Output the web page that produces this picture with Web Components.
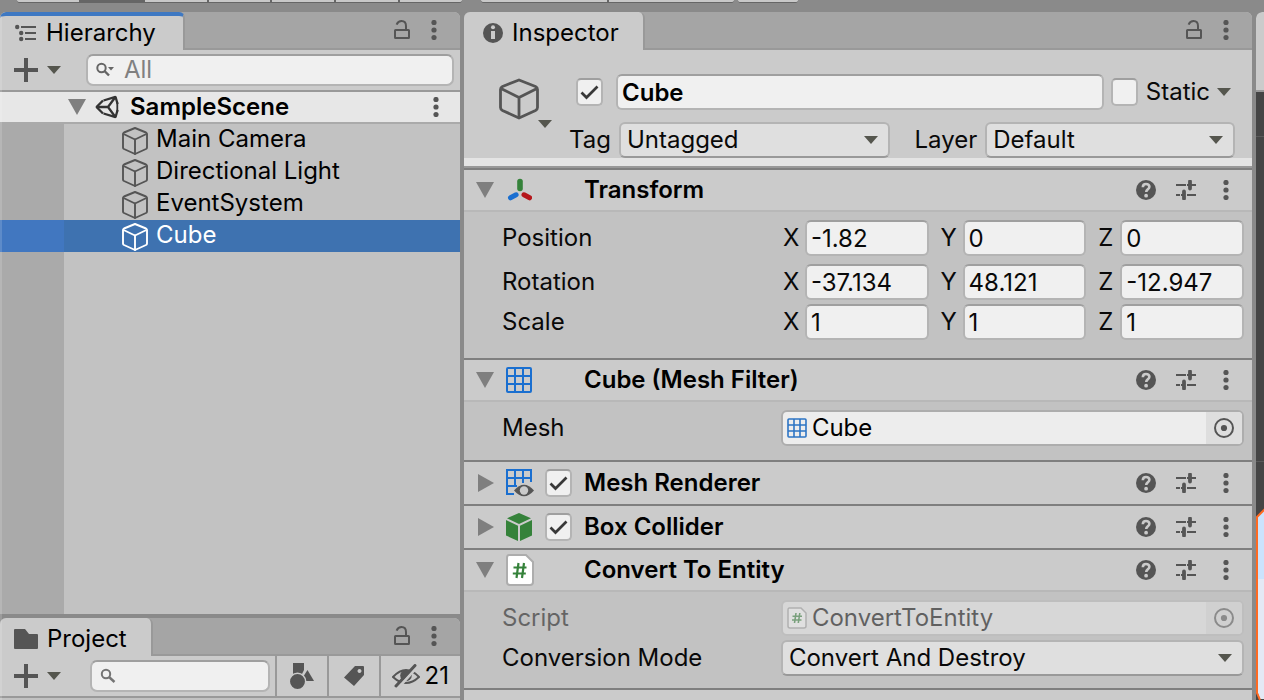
<!DOCTYPE html>
<html lang="en">
<head>
<meta charset="utf-8">
<title>Editor</title>
<style>
  html, body { margin: 0; height: 100%; }
  body {
    font-family: Inter, "Liberation Sans", sans-serif;
    font-size: 24px;
    line-height: 30px;
    color: #090909;
    background: #8a8a8a;
    overflow: hidden;
    --panel: #c2c2c2;
    --bar: #cbcbcb;
    --field: #f0f0f0;
    --ink: #555555;
    --edge: #b4b4b4;
    --edge-dark: #9f9f9f;
    --rule: #7f7f7f;
  }
</style>
</head>
<body>
<editor-app></editor-app>

<script>
const ICONS = {
  list: [23, 18, `<g fill="currentColor"><circle cx="3.2" cy="3" r="2.2"/><circle cx="7.2" cy="9" r="2.2"/><circle cx="7.2" cy="15" r="2.2"/><path d="M7 2h15v2H7zM11 8h11v2H11zM11 14h11v2H11z"/></g>`],
  folder: [24, 20, `<path fill="currentColor" d="M1 0h10l4 5h8a1 1 0 0 1 1 1v13a1 1 0 0 1-1 1H1a1 1 0 0 1-1-1V1a1 1 0 0 1 1-1z"/>`],
  info: [20, 20, `<circle cx="10" cy="10" r="10" fill="currentColor"/><circle cx="10" cy="4.2" r="2" fill="#cbcbcb"/><path fill="#cbcbcb" d="M8 8h4v8H8z"/>`],
  lock: [18, 20, `<g fill="none" stroke="currentColor" stroke-width="2"><rect x="2" y="10" width="14" height="8" rx=".5"/><path d="M3.6 4.6C4.6 2.300 6.400 1 8.600 1 11.500 1 13 3.200 13 6v4"/></g>`],
  kebab: [6, 20, `<g fill="currentColor"><circle cx="3" cy="2.5" r="2.6"/><circle cx="3" cy="10" r="2.6"/><circle cx="3" cy="17.500" r="2.6"/></g>`],
  plus: [24, 24, `<path fill="currentColor" d="M10 0h4v10h10v4H14v10h-4V14H0v-4h10z"/>`],
  down: [14, 8, `<path fill="#55564e" d="M0 0h14L7 8z"/>`],
  search: [18, 16, `<g fill="none" stroke="#747474"><circle cx="6" cy="6" r="4.200" stroke-width="2"/><path d="M9 9l5.500 5" stroke-width="2.400"/></g>`],
  searchmenu: [18, 16, `<g fill="none" stroke="#666"><circle cx="5.500" cy="6" r="4.200" stroke-width="2"/><path d="M8.500 9l4.500 4.500" stroke-width="2.400"/></g><path fill="#666" d="M12 5h6l-3 3.400z"/>`],
  open: [18, 16, `<path fill="#7f7f7f" d="M0 0h18L9 16z"/>`],
  closed: [18, 18, `<path fill="#7f7f7f" d="M2 0v18l16-9z"/>`],
  scene: [24, 24, `<g fill="none" stroke="#333" stroke-width="2.300" stroke-linejoin="bevel"><path d="M8 5.500L1.500 12 8 18.500"/><path d="M8.500 5.500L20.500 1.800 22.600 9"/><path d="M8.500 18.500L20.500 22.200 22.600 15"/><path d="M2 12h11M13 12L20.400 2M13 12l7.400 10"/><path d="M22.300 7.500v9" stroke-width="1.800"/></g>`],
  cube: [26, 28, `<g fill="none" stroke="currentColor" stroke-width="1.900" stroke-linejoin="round" stroke-linecap="round"><path d="M13 1L24 5.500q1 .5 1 1.500v13.500q0 1-1 1.500L13 27 2 22q-1-.5-1-1.500V7q0-1 1-1.500z"/><path d="M1.600 7L13 12.500 24.400 7M13 12.500V27"/></g>`],
  bigcube: [40, 42, `<g fill="none" stroke="#555" stroke-width="2.800" stroke-linejoin="round" stroke-linecap="round"><path d="M20 2L36.500 8.500q2 1 2 3v18q0 2-2 3L20 40 3.500 32.500q-2-1-2-3v-18q0-2 2-3z"/><path d="M3 11L20 19.500 37 11M20 19.500V39"/></g>`],
  transform: [26, 24, `<g stroke-linecap="round" stroke-width="5.600"><path d="M14 3.500v7" stroke="#35823a"/><path d="M4.500 19.800l5.600-3" stroke="#1a6fd0" stroke-width="5"/><path d="M18 16.800l5.600 3" stroke="#b5171b" stroke-width="5"/></g>`],
  grid: [26, 26, `<g fill="none" stroke="#1a6fd0" stroke-width="2"><rect x="1" y="1" width="24" height="24" rx="1"/><path d="M9 1v24M17 1v24M1 9h24M1 17h24"/></g>`],
  gridsmall: [20, 20, `<g fill="none" stroke="#2c74c4" stroke-width="1.600"><rect x="1" y="1" width="18" height="18" rx="1"/><path d="M7 1v18M13 1v18M1 7h18M1 13h18"/></g>`],
  renderer: [28, 28, `<g fill="none" stroke="#1a6fd0" stroke-width="2"><path d="M25 13V1H1v24h7M9 1v16M17 1v13M1 9h24M1 17h10"/></g><path fill="#555" d="M8 21.500Q18 10 28 21.500 18 33 8 21.500z"/><circle cx="18" cy="21.500" r="4.200" fill="#cbcbcb"/>`],
  box: [26, 28, `<path fill="#35823a" d="M13 0l12 5.200-12 5.800L1 5.200zM0 7l12 5.700V28L0 22.500zM26 7l-12 5.700V28l12-5.500z"/>`],
  script: [28, 32, `<path d="M3 1h17l7 7v20q0 3-3 3H4q-3 0-3-3V4q0-3 2-3z" fill="#fff" stroke="#adadad" stroke-width="2"/><path d="M12.500 9l-2 15M18 9l-2 15M7.500 13.500h13M6.800 19.500h13" stroke="#35823a" stroke-width="2.200" fill="none"/>`],
  scriptsmall: [20, 22, `<path d="M2 1h12l5 5v13q0 2-2 2H3q-2 0-2-2V3q0-2 1-2z" fill="#fff" stroke="#a0a0a0" stroke-width="1.500"/><path d="M9 6L7.500 16M12.800 6l-1.500 10M5.500 9.200h9.500M5 13h9.500" stroke="#35823a" stroke-width="1.600" fill="none"/>`],
  help: [20, 20, `<circle cx="10" cy="10" r="10" fill="currentColor"/><path d="M6.800 7.200C6.900 5 8.200 4 10 4c2 0 3.400 1.100 3.400 2.800 0 2.400-3.200 2.600-3.200 5.200" fill="none" stroke="#cbcbcb" stroke-width="2.600"/><circle cx="10.100" cy="15.700" r="1.900" fill="#cbcbcb"/>`],
  preset: [20, 20, `<g stroke="currentColor" fill="none"><path d="M0 5h10M17 5h3M0 15h4M11 15h9" stroke-width="2"/><path d="M11 5h6M5 15h4" stroke-width="2"/><path d="M14 1.500v7M8 11.500v7" stroke-width="3.800" stroke-linecap="round"/></g>`],
  target: [20, 20, `<circle cx="10" cy="10" r="9" fill="none" stroke="currentColor" stroke-width="2"/><circle cx="10" cy="10" r="3.100" fill="currentColor"/>`],
  shapes: [24, 26, `<g fill="currentColor"><path d="M3 0h11v7l-2 4H3z"/><path d="M17.500 7L24 18h-9l-2-4z"/></g><circle cx="7.500" cy="18.500" r="8.200" fill="currentColor" stroke="#cbcbcb" stroke-width="1.500"/>`],
  tag: [20, 20, `<path fill="currentColor" fill-rule="evenodd" d="M11 0h8q1 0 1 1v8l-10 11L0 11.500zM15.500 3a2 2 0 1 0 .01 0z"/>`],
  eyeoff: [28, 24, `<path d="M1 13Q14-1 27 13 14 25 1 13z" fill="none" stroke="currentColor" stroke-width="2"/><circle cx="14" cy="11.500" r="5.800" fill="currentColor"/><path d="M6 24L25 3" stroke="#cbcbcb" stroke-width="3"/><path d="M4 22L23 1.500" stroke="currentColor" stroke-width="3" stroke-linecap="round"/>`]
};

const define = (name, html) => {
  const tpl = document.createElement('template');
  customElements.define(name, class extends HTMLElement {
    connectedCallback() {
      if (this.shadowRoot) return;
      tpl.innerHTML = typeof html === 'function' ? html(this) : html;
      this.attachShadow({ mode: 'open' }).append(tpl.content.cloneNode(true));
    }
  });
};
const attr = (el, name, fallback = '') => el.getAttribute(name) ?? fallback;

define('ui-icon', el => {
  const [w, h, body] = ICONS[attr(el, 'name')];
  return `<style>:host{display:block;flex:none;color:var(--ink)}svg{display:block}</style>
    <svg width="${w}" height="${h}" viewBox="0 0 ${w} ${h}" aria-hidden="true">${body}</svg>`;
});

define('icon-button', el => `<style>
    :host{display:block;flex:none}
    button{display:flex;align-items:center;justify-content:center;gap:9px;min-width:20px;height:24px;padding:0;border:0;background:none;font:inherit}
  </style><button type="button" aria-label="${attr(el, 'label')}"><slot></slot></button>`);

define('check-box', el => `<style>
    :host{display:block;flex:none}
    label{display:flex;align-items:center;gap:8px}
    input{appearance:none;box-sizing:border-box;width:27px;height:28px;margin:0;border:2px solid var(--edge);border-top-color:var(--edge-dark);border-radius:5px;background:var(--field)}
    input:checked{background:var(--field) url("data:image/svg+xml,%3Csvg xmlns='http://www.w3.org/2000/svg' width='23' height='24'%3E%3Cpath d='M3.500 12.500l5 5L19.500 6.500' fill='none' stroke='%23383838' stroke-width='2.700'/%3E%3C/svg%3E") center no-repeat}
  </style><label><input type="checkbox" ${el.hasAttribute('checked') ? 'checked' : ''} aria-label="${attr(el, 'label')}"><slot></slot></label>`);

define('search-box', el => `<style>
    :host{display:block;flex:1;min-width:0}
    label{display:flex;align-items:center;gap:10px;box-sizing:border-box;height:32px;padding:0 8px;border:2px solid var(--edge);border-top-color:var(--edge-dark);border-radius:7px;background:var(--field)}
    input{flex:1;min-width:0;padding:0;border:0;outline:0;background:none;font:inherit;line-height:28px}
    input::placeholder{color:#808080;opacity:1}
  </style><label><ui-icon name="${attr(el, 'icon')}"></ui-icon><input type="search" aria-label="Search" placeholder="${attr(el, 'hint')}"></label>`);

define('drop-down', el => `<style>
    :host{display:grid;flex:1;min-width:0;align-items:center}
    select,ui-icon{grid-area:1/1}
    select{appearance:none;box-sizing:border-box;width:100%;height:36px;margin:0;padding:0 32px 0 6px;border:2px solid var(--edge);border-bottom-color:#999;border-radius:6px;background:#dfdfdf;color:inherit;font:inherit}
    ui-icon{justify-self:end;margin-right:12px;pointer-events:none}
  </style><select aria-label="${attr(el, 'label')}"><option>${attr(el, 'value')}</option></select><ui-icon name="down"></ui-icon>`);

define('dock-panel', el => `<style>
    :host{display:flex;flex-direction:column;min-width:0;min-height:0;border-radius:6px 6px 0 0;background:var(--panel);overflow:hidden}
    header{display:flex;align-items:stretch;justify-content:space-between;flex:none;height:38px;background:#a5a5a5;box-shadow:inset 0 -2px #999}
    .tab{display:flex;align-items:center;gap:9px;box-sizing:border-box;padding:3px 24px 0 14px;border-right:2px solid #999;border-radius:6px 6px 0 0;background:var(--bar);color:#000}
    :host([active]) .tab{border-top:4px solid #3e78c2;padding-top:0;padding-right:27px}
    :host([wide]) .tab{padding-left:19px}
    .tools{display:flex;align-items:center;gap:12px;padding:0 16px 2px 0}
  </style>
  <header><div class="tab"><ui-icon name="${attr(el, 'icon')}"></ui-icon><span>${attr(el, 'title')}</span></div>
  <div class="tools"><icon-button label="Lock"><ui-icon name="lock"></ui-icon></icon-button><icon-button label="Menu"><ui-icon name="kebab"></ui-icon></icon-button></div></header>
  <slot></slot>`);

define('tool-bar', `<style>
    :host{display:flex;align-items:center;flex:none;box-sizing:border-box;height:42px;padding:0 6px 0 14px;gap:25px;background:var(--bar);border-bottom:2px solid #999}
  </style><slot></slot>`);

define('add-menu', `<style>:host{display:block;flex:none}</style>
  <icon-button label="Add"><ui-icon name="plus"></ui-icon><ui-icon name="down"></ui-icon></icon-button>`);

define('scene-row', el => `<style>
    :host{display:grid;grid-template-columns:18px 24px 1fr auto;column-gap:9px;align-items:center;flex:none;box-sizing:border-box;height:32px;padding:0 14px 0 68px;background:#e7e7e7;border-bottom:2px solid #aaa;color:#000;font-weight:600}
    span{padding-left:2px}
  </style><ui-icon name="open"></ui-icon><ui-icon name="scene"></ui-icon><span><slot></slot></span>
  <icon-button label="Scene menu"><ui-icon name="kebab"></ui-icon></icon-button>`);

define('tree-row', `<style>
    :host{display:flex;align-items:center;gap:8px;box-sizing:border-box;height:32px;padding:0 0 2px 58px;color:#000}
    ui-icon{padding-top:4px}
    :host([selected]){color:#fff;--ink:#fff;background:#3e72b0;box-shadow:-64px 0 #4177c0}
  </style><ui-icon name="cube"></ui-icon><span><slot></slot></span>`);

define('tree-list', `<style>
    :host{display:block;flex:1;min-height:0;padding-left:64px;background:linear-gradient(90deg,#aaa 64px,var(--panel) 64px)}
  </style><slot></slot>`);

define('filter-button', el => `<style>
    :host{display:block;flex:none;align-self:stretch;box-sizing:border-box;min-width:52px;border-left:2px solid #999}
    button{display:flex;align-items:center;justify-content:center;gap:5px;width:100%;height:100%;padding:0 11px;border:0;background:none;color:#000;font:inherit}
  </style><button type="button" aria-label="${attr(el, 'label')}"><slot></slot></button>`);

define('project-bar', `<style>
    :host{display:flex;align-items:center;flex:none;box-sizing:border-box;height:42px;padding-left:14px;background:var(--bar);border-bottom:2px solid #999}
    search-box{margin:0 5px 0 29px}
  </style>
  <add-menu></add-menu><search-box icon="search"></search-box>
  <filter-button label="Filter by type"><ui-icon name="shapes"></ui-icon></filter-button>
  <filter-button label="Filter by label"><ui-icon name="tag"></ui-icon></filter-button>
  <filter-button label="Hidden packages"><ui-icon name="eyeoff"></ui-icon>21</filter-button>`);

define('object-header', `<style>
    :host{display:grid;grid-template-columns:auto 1fr;flex:none;box-sizing:border-box;padding:24px 9px 0 35px;background:var(--bar)}
    .kind{display:grid;justify-items:start;align-content:start;width:53px;padding-top:4px}
    .kind ui-icon + ui-icon{justify-self:end}
    .lines{display:grid;gap:12px;min-width:0}
    .line{display:flex;align-items:center;min-width:0}
    .first{gap:7px;padding-left:24px}
    .first check-box:first-child{margin-right:6px}
    .first ui-icon{margin-right:12px}
    .name{flex:1;min-width:0;box-sizing:border-box;height:36px;padding:0 4px;border:2px solid var(--edge);border-top-color:var(--edge-dark);border-radius:6px;background:var(--field);color:#000;font:inherit;font-weight:600}
    .second{gap:8px;padding:0 8px 0 17px}
    .second drop-down{flex:13;margin-right:17px}
    .second drop-down:last-child{flex:12;margin-right:0}
  </style>
  <div class="kind"><ui-icon name="bigcube"></ui-icon><ui-icon name="down"></ui-icon></div>
  <div class="lines">
    <div class="line first"><check-box checked label="Active"></check-box><input class="name" aria-label="Name" value="Cube">
      <check-box label="Static">Static</check-box><ui-icon name="down"></ui-icon></div>
    <div class="line second"><span>Tag</span><drop-down label="Tag" value="Untagged"></drop-down><span>Layer</span><drop-down label="Layer" value="Default"></drop-down></div>
  </div>`);

define('component-card', el => `<style>
    :host{display:block;flex:none;border-top:2px solid var(--rule)}
    header{display:grid;grid-template-columns:18px 27px 27px 1fr auto;column-gap:12px;align-items:center;box-sizing:border-box;height:42px;padding:0 16px 0 12px;background:var(--bar)}
    :host([open]) header{border-bottom:2px solid #b8b8b8}
    h2{margin:0;font:inherit;font-weight:600;color:#000;white-space:nowrap}
    .tools{display:flex;gap:20px}
    .body{display:grid;gap:4px;padding:8px 8px var(--foot,12px) 38px}
  </style>
  <header><ui-icon name="${el.hasAttribute('open') ? 'open' : 'closed'}"></ui-icon>
    ${el.hasAttribute('icon') ? `<ui-icon name="${attr(el, 'icon')}"></ui-icon>` : '<i></i>'}
    ${el.hasAttribute('toggle') ? '<check-box checked label="Enabled"></check-box>' : '<i></i>'}
    <h2>${attr(el, 'title')}</h2>
    <div class="tools"><icon-button label="Help"><ui-icon name="help"></ui-icon></icon-button><icon-button label="Presets"><ui-icon name="preset"></ui-icon></icon-button><icon-button label="Menu"><ui-icon name="kebab"></ui-icon></icon-button></div></header>
  ${el.hasAttribute('open') ? '<div class="body"><slot></slot></div>' : ''}`);

const PROPERTY_ROW = `:host{display:grid;grid-template-columns:3fr 5fr;column-gap:1px;align-items:center;min-width:0}`;

define('vector-row', el => {
  const v = attr(el, 'value').split(' ');
  return `<style>${PROPERTY_ROW}
    .axes{display:grid;grid-template-columns:repeat(3,1fr);gap:10px}
    label{display:flex;align-items:center;min-width:0}
    label span{flex:none;width:24px;padding-left:2px;box-sizing:border-box}
    input{flex:1;min-width:0;box-sizing:border-box;height:36px;padding:0 4px;border:2px solid var(--edge);border-top-color:var(--edge-dark);border-radius:6px;background:var(--field);color:inherit;font:inherit}
  </style><span id="name">${attr(el, 'label')}</span>
  <div class="axes" role="group" aria-labelledby="name">${['X', 'Y', 'Z'].map((a, i) => `<label><span>${a}</span><input value="${v[i]}"></label>`).join('')}</div>`;
});

define('object-row', el => `<style>${PROPERTY_ROW}
    :host([disabled]){opacity:.5}
    .field{display:flex;align-items:center;box-sizing:border-box;height:36px;padding-left:4px;border:2px solid #adadad;border-radius:6px;background:#ededed;overflow:hidden}
    :host([disabled]) .field{border-color:#bbb}
    input{flex:1;min-width:0;padding:0 0 0 5px;border:0;background:none;color:#000;font:inherit;line-height:32px}
    button{display:flex;align-items:center;justify-content:center;flex:none;width:36px;height:32px;padding:0;border:0;background:#dedede}
  </style><label for="ref">${attr(el, 'label')}</label>
  <div class="field"><ui-icon name="${attr(el, 'icon')}"></ui-icon><input id="ref" readonly ${el.hasAttribute('disabled') ? 'disabled' : ''} value="${attr(el, 'value')}"><button type="button" aria-label="Select"><ui-icon name="target"></ui-icon></button></div>`);

define('choice-row', el => `<style>${PROPERTY_ROW}</style>
  <span>${attr(el, 'label')}</span><drop-down label="${attr(el, 'label')}" value="${attr(el, 'value')}"></drop-down>`);

define('top-strip', `<style>
    :host{display:flex;gap:4px;height:12px;padding:0 466px 0 17px}
    div{display:flex;gap:2px;box-sizing:border-box;height:3px;border-bottom:1px solid #666;border-radius:0 0 4px 4px;background:#666;overflow:hidden}
    i{flex:1;background:#c8c8c8}
    i.on{background:#666}
    .a{flex:445;margin-right:15px}.b{flex:253}.c{flex:60}
  </style><div class="a"><i></i><i class="on"></i><i></i><i></i><i></i><i></i><i></i></div><div class="b"><i></i><i></i></div><div class="c"><i></i></div>`);

define('scene-view', `<style>
    :host{display:flex;flex-direction:column;min-width:0;border-radius:6px 0 0 0;background:#454545;overflow:hidden}
    .bar{flex:none;height:78px;background:var(--bar);border-bottom:2px solid #999}
    .space{flex:1;background:linear-gradient(#5a5a5a,#5a5a5a) 0 44px/100% 1px no-repeat,linear-gradient(#5a5a5a,#5a5a5a) 0 369px/100% 1px no-repeat}
    svg{display:block;flex:none;width:100%;height:192px}
  </style><div class="bar"></div><div class="space"></div>
  <svg viewBox="0 0 8 192" preserveAspectRatio="xMinYMin slice" aria-hidden="true"><path d="M1 9l8-8v190H4l-3-8z" fill="#e4e9f5"/><path d="M1 9l8-8v70H1z" fill="#cbe3fd"/><path d="M9 1L1 9v176l3 7" fill="none" stroke="#ff6a22" stroke-width="2"/></svg>`);

define('editor-app', `<style>
    :host{display:grid;grid-template-rows:12px minmax(0,1fr);height:100vh}
    main{display:grid;grid-template-columns:460fr 788fr 8px;gap:4px;min-height:0}
    .left{display:flex;flex-direction:column;gap:4px;min-width:0;min-height:0;position:relative}
    .left::after{content:"";position:absolute;inset:4px auto 0 0;width:2px;background:rgba(255,255,255,.15)}
    .left dock-panel:first-child{flex:1}
    .left dock-panel:last-child{flex:none;height:82px}
    .more{flex:none;height:8px;background:#e4e4e4;border-bottom:2px solid #999}
    .transform{--foot:18px}.filter{--foot:14px}
    .transform vector-row:first-child{margin-bottom:4px}
  </style>
  <top-strip></top-strip>
  <main>
    <div class="left">
      <dock-panel active title="Hierarchy" icon="list">
        <tool-bar><add-menu></add-menu><search-box icon="searchmenu" hint="All"></search-box></tool-bar>
        <scene-row>SampleScene</scene-row>
        <tree-list><tree-row>Main Camera</tree-row><tree-row>Directional Light</tree-row><tree-row>EventSystem</tree-row><tree-row selected>Cube</tree-row></tree-list>
      </dock-panel>
      <dock-panel title="Project" icon="folder"><project-bar></project-bar></dock-panel>
    </div>
    <dock-panel wide title="Inspector" icon="info">
      <object-header></object-header>
      <div class="more"></div>
      <component-card class="transform" open icon="transform" title="Transform">
        <vector-row label="Position" value="-1.82 0 0"></vector-row>
        <vector-row label="Rotation" value="-37.134 48.121 -12.947"></vector-row>
        <vector-row label="Scale" value="1 1 1"></vector-row>
      </component-card>
      <component-card class="filter" open icon="grid" title="Cube (Mesh Filter)">
        <object-row label="Mesh" icon="gridsmall" value="Cube"></object-row>
      </component-card>
      <component-card icon="renderer" toggle title="Mesh Renderer"></component-card>
      <component-card icon="box" toggle title="Box Collider"></component-card>
      <component-card open icon="script" title="Convert To Entity">
        <object-row disabled label="Script" icon="scriptsmall" value="ConvertToEntity"></object-row>
        <choice-row label="Conversion Mode" value="Convert And Destroy"></choice-row>
      </component-card>
      <component-card></component-card>
    </dock-panel>
    <scene-view></scene-view>
  </main>`);
</script>
</body>
</html>
